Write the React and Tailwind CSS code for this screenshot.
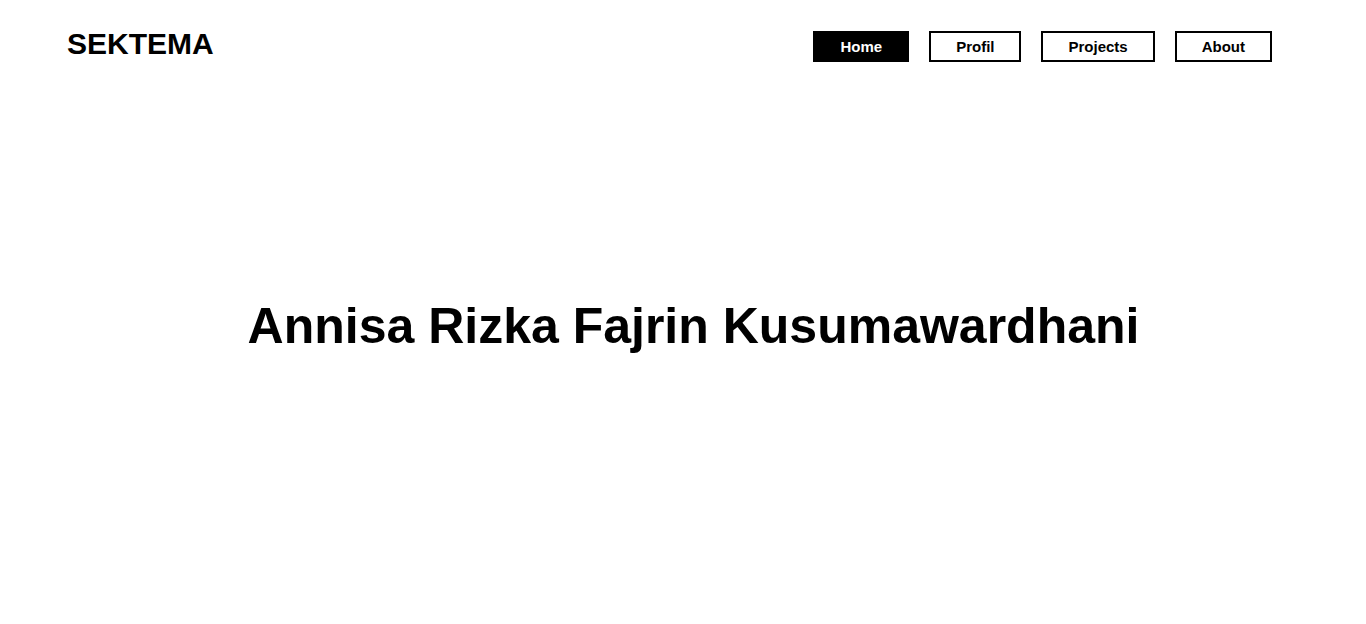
export default function App() {
  const font = { fontFamily: '"Liberation Sans", Arial, sans-serif' };
  const items = ["Home", "Profil", "Projects", "About"];
  return (
    <div className="min-h-[624px] bg-white text-black" style={font}>
      <header className="flex items-start justify-between pl-[67px] pr-[94px] pt-[31px]">
        <div className="-mt-[2px] text-[30px] font-bold leading-none">SEKTEMA</div>
        <nav className="flex gap-[20px]">
          {items.map((it, i) => (
            <a
              key={it}
              href="#"
              className={
                i === 0
                  ? "border-2 border-black bg-black px-[25px] py-[5px] text-[15px] font-bold leading-[17px] text-white"
                  : "border-2 border-black bg-white px-[25px] py-[5px] text-[15px] font-bold leading-[17px] text-black"
              }
            >
              {it}
            </a>
          ))}
        </nav>
      </header>
      <main className="pl-[21px] pt-[239px] text-center">
        <h1 className="text-[50px] font-bold leading-none">Annisa Rizka Fajrin Kusumawardhani</h1>
      </main>
    </div>
  );
}
